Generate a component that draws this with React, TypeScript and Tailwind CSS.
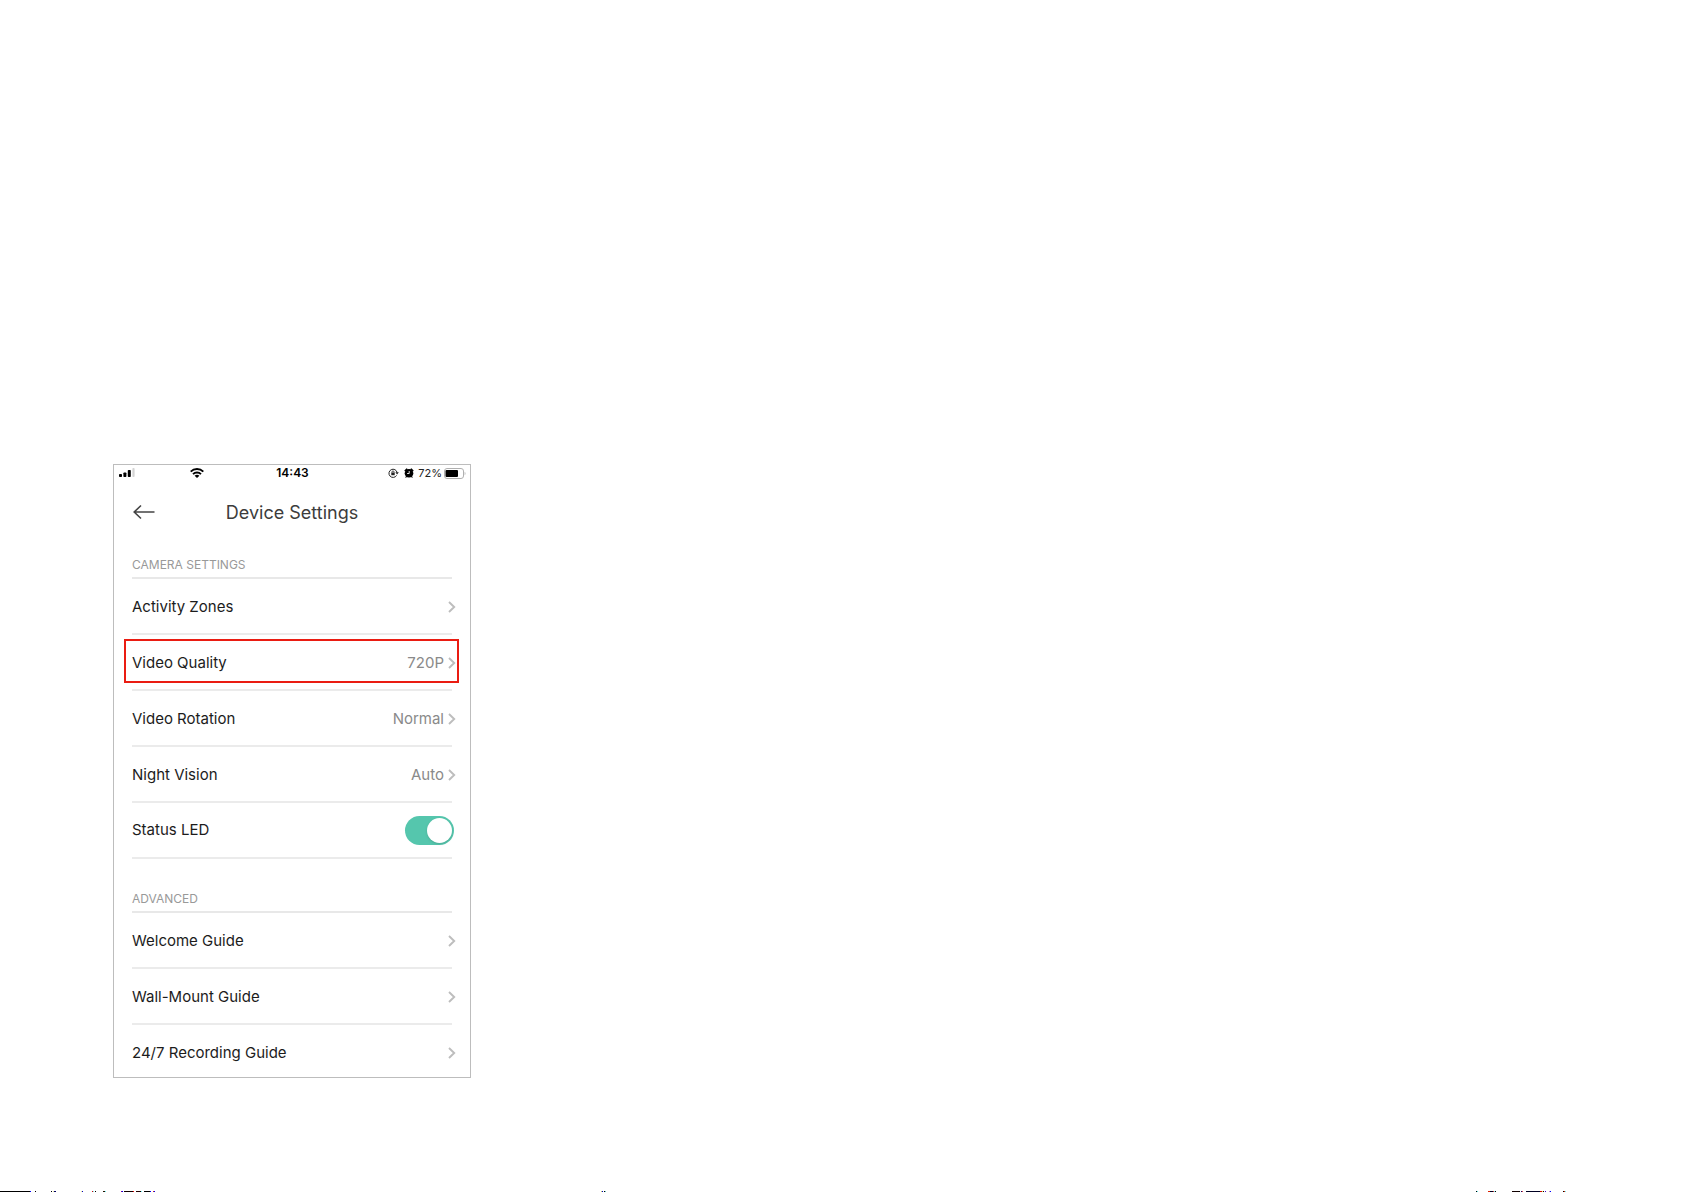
import { ReactNode } from "react";
import clsx from "clsx";

interface RowProps {
  label: string;
  value?: string;
  highlighted?: boolean;
}

function Chevron() {
  return (
    <svg width="8" height="12" viewBox="0 0 8 12" fill="none" stroke="#bdbdbd" strokeWidth="1.9" aria-hidden="true">
      <path d="M1 1 6.2 6 1 11" />
    </svg>
  );
}

function Row({ label, value, highlighted }: RowProps) {
  return (
    <li className="relative h-14 border-b-2 border-[#ebebeb] last:-mb-1 last:border-transparent">
      <button type="button" className="-mr-1 flex h-full w-[calc(100%+4px)] items-center pt-0.5 text-left">
        <span className="flex-1 text-[#1c1c1c]">{label}</span>
        {value && <span className="mr-1 text-[#8a8a8a]">{value}</span>}
        <Chevron />
      </button>
      {highlighted && (
        <span className="pointer-events-none absolute top-1 bottom-1.5 -left-2 -right-[7px] border-2 border-[#ea1c12]" />
      )}
    </li>
  );
}

function SwitchRow({ label }: { label: string }) {
  return (
    <li className="h-14 border-b-2 border-[#ebebeb]">
      <label className="-mr-0.5 flex h-full items-center">
        <span className="flex-1 text-[#1c1c1c]">{label}</span>
        <input type="checkbox" role="switch" defaultChecked className="peer sr-only" />
        <span className="flex h-[29px] w-[49px] items-center rounded-full bg-[#c8c8c8] p-0.5 peer-checked:justify-end peer-checked:bg-[#55c6ad]">
          <span className="size-[25px] rounded-full bg-white shadow-sm" />
        </span>
      </label>
    </li>
  );
}

function Section({ title, className, children }: { title: string; className?: string; children: ReactNode }) {
  return (
    <section className="px-[18px]">
      <h2 className={clsx("flex items-end border-b-2 border-[#e8e8e8] pb-1 text-[12px] leading-4 text-[#999]", className)}>
        {title}
      </h2>
      <ul className="text-[15px] leading-5">{children}</ul>
    </section>
  );
}

function StatusBar() {
  return (
    <div className="flex h-4 items-center pr-1 pl-[5px] text-black">
      <div className="flex flex-1 items-center gap-[55px]">
        <svg width="16" height="10" viewBox="0 0 16 10" aria-hidden="true">
          <rect x="0" y="6" width="3" height="3" rx="0.8" />
          <rect x="4.4" y="4.5" width="3" height="4.5" rx="0.8" />
          <rect x="8.8" y="2" width="3" height="7" rx="0.8" />
          <rect x="13.4" y="0" width="2.2" height="9" rx="0.8" fill="#d4d4d4" />
        </svg>
        <svg width="14" height="10" viewBox="0 0 14 10" fill="none" stroke="#000" strokeWidth="1.9" aria-hidden="true">
          <path d="M0.7 3.6C4.2 0.1 9.8 0.1 13.3 3.6M3 6.1c2.2-2.1 5.8-2.1 8 0" />
          <path d="M4.6 7.7c1.4-1.2 3.4-1.2 4.8 0L7 10Z" fill="#000" stroke="none" />
        </svg>
      </div>
      <span className="text-[12px] leading-4 font-semibold">14:43</span>
      <div className="flex flex-1 items-center justify-end">
        <svg width="11" height="10" viewBox="0 0 11 10" fill="none" stroke="#222" aria-hidden="true">
          <path d="M8.6 7.4A4.1 4.1 0 1 1 9.1 4.6" />
          <path d="M7.4 4.3h3.4L9.1 6.6Z" fill="#222" stroke="none" />
          <rect x="3.3" y="4.6" width="3.4" height="2.6" fill="#222" stroke="none" />
          <path d="M4 4.8V3.9a1 1 0 0 1 2 0v.9" strokeWidth="0.8" />
        </svg>
        <svg width="10" height="10" viewBox="0 0 10 10" className="ml-[5px]" aria-hidden="true">
          <circle cx="5" cy="5.3" r="4.3" />
          <path d="M0.3 2.6 2.6 0.3l1.3 1L1.2 3.8ZM9.7 2.6 7.4 0.3l-1.3 1 2.7 2.5ZM1 9.8l1.2-2 1.4 1.1ZM9 9.8l-1.2-2-1.4 1.1Z" />
          <path d="M5.2 3v2.5H3.1" fill="none" stroke="#fff" strokeWidth="0.9" />
        </svg>
        <span className="ml-1 text-[11px] leading-4 text-[#222]">72%</span>
        <svg width="22" height="11" viewBox="0 0 22 11" className="ml-0.5" aria-hidden="true">
          <rect x="0.5" y="0.5" width="19" height="10" rx="2.5" fill="#fff" stroke="#b0b0b0" />
          <rect x="1.5" y="2" width="12.5" height="7" rx="1" />
          <path d="M20.7 3.8c1 .4 1 3 0 3.4Z" fill="#aaa" />
        </svg>
      </div>
    </div>
  );
}

// x, width, colour of each mark along the bottom edge
const leftMarks: [number, number, string][] = [
  [0, 30, "#000"], [30, 1, "#00f"], [35, 1, "#000"], [51, 1, "#000"], [53, 1, "#dd8"], [54, 2, "#006"],
  [81, 1, "#ee8"], [82, 1, "#00c"], [92, 1, "#d00"], [93, 1, "#6ee"], [95, 1, "#000"], [103, 2, "#210"],
  [105, 1, "#6ee"], [121, 1, "#808"], [122, 1, "#00f"], [124, 9, "#100"], [133, 1, "#e00"], [136, 5, "#200"],
  [141, 1, "#6ee"], [144, 6, "#000"], [150, 1, "#00f"], [153, 1, "#c22"], [154, 1, "#00f"],
  [601, 1, "#cc6"], [602, 1, "#00c"], [604, 1, "#000"], [605, 1, "#6cc"],
];

// measured from the right edge of the page
const rightMarks: [number, number, string][] = [
  [209, 1, "#000"], [208, 1, "#6ee"], [197, 2, "#d20"], [195, 3, "#002"], [192, 1, "#c22"], [191, 1, "#6ee"],
  [190, 1, "#000"], [173, 7, "#100"], [166, 1, "#000"], [164, 2, "#106"], [163, 1, "#d44"], [159, 14, "#002"],
  [145, 2, "#c00"], [143, 1, "#ee6"], [142, 1, "#000"], [140, 1, "#40c"], [136, 1, "#c8c"], [135, 1, "#00f"],
  [122, 1, "#000"], [121, 1, "#d20"], [120, 1, "#6ee"],
];

function EdgeMarks() {
  return (
    <div className="mt-auto flex justify-between" aria-hidden="true">
      <svg width="606" height="1" shapeRendering="crispEdges">
        {leftMarks.map(([x, width, fill]) => (
          <rect key={x} x={x} width={width} height="1" fill={fill} />
        ))}
      </svg>
      <svg width="210" height="1" shapeRendering="crispEdges">
        {rightMarks.map(([right, width, fill]) => (
          <rect key={right} x={210 - right} width={width} height="1" fill={fill} />
        ))}
      </svg>
    </div>
  );
}

export default function App() {
  return (
    <div className="flex min-h-screen flex-col bg-white font-['Inter','Liberation_Sans',sans-serif]">
      <main className="px-[113px] pt-[464px] pb-8">
        <div className="w-full max-w-[358px] overflow-hidden border border-[#bdbdbd] bg-white">
          <StatusBar />
          <header className="grid h-[62px] grid-cols-[1fr_auto_1fr] items-center px-[18px]">
            <button type="button" aria-label="Back" className="justify-self-start pl-px">
              <svg width="22" height="16" viewBox="0 0 22 16" fill="none" stroke="#444" strokeWidth="1.6" aria-hidden="true">
                <path d="M21.5 8H1.2M8 1.5 1.2 8 8 14.5" />
              </svg>
            </button>
            <h1 className="pt-0.5 text-[18px] leading-6 text-[#3c3c3c]">Device Settings</h1>
          </header>
          <Section title="CAMERA SETTINGS" className="h-9">
            <Row label="Activity Zones" />
            <Row label="Video Quality" value="720P" highlighted />
            <Row label="Video Rotation" value="Normal" />
            <Row label="Night Vision" value="Auto" />
            <SwitchRow label="Status LED" />
          </Section>
          <Section title="ADVANCED" className="h-[54px]">
            <Row label="Welcome Guide" />
            <Row label="Wall-Mount Guide" />
            <Row label="24/7 Recording Guide" />
          </Section>
        </div>
      </main>
      <EdgeMarks />
    </div>
  );
}
